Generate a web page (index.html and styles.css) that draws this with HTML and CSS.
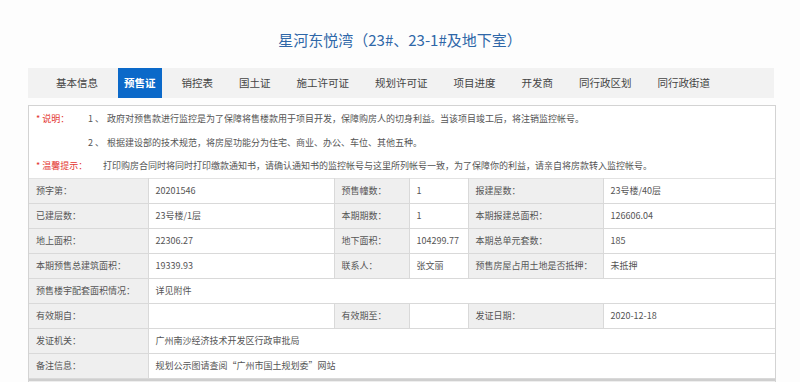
FILE: index.html
```html
<!DOCTYPE html>
<html lang="zh-CN">

<head>
    <meta charset="UTF-8">
    <meta name="viewport" content="width=device-width, initial-scale=1.0">
    <title>星河东悦湾</title>
    <link rel="stylesheet" href="styles.css">
</head>

<body>
    <h1 class="project-title">星河东悦湾（23#、23-1#及地下室）</h1>

    <ul class="tabs">
        <li>基本信息</li>
        <li class="active">预售证</li>
        <li>销控表</li>
        <li>国土证</li>
        <li>施工许可证</li>
        <li>规划许可证</li>
        <li>项目进度</li>
        <li>开发商</li>
        <li>同行政区划</li>
        <li>同行政街道</li>
    </ul>

    <div class="panel">
        <!-- 说明 -->
        <div class="notes">
            <div class="note-row">
                <span class="note-label">* 说明：</span>
                <span class="note-num">1 、</span>
                <span>政府对预售款进行监控是为了保障将售楼款用于项目开发，保障购房人的切身利益。当该项目竣工后，将注销监控帐号。</span>
            </div>
            <div class="note-row">
                <span class="note-label"></span>
                <span class="note-num">2 、</span>
                <span>根据建设部的技术规范，将房屋功能分为住宅、商业、办公、车位、其他五种。</span>
            </div>
            <div class="note-row">
                <span class="note-label note-label-wide">* 温馨提示：</span>
                <span>打印购房合同时将同时打印缴款通知书，请确认通知书的监控帐号与这里所列帐号一致，为了保障你的利益，请亲自将房款转入监控帐号。</span>
            </div>
        </div>

        <table class="info-table">
            <colgroup>
                <col style="width: 119px">
                <col style="width: 186px">
                <col style="width: 75px">
                <col style="width: 59px">
                <col style="width: 135px">
                <col>
            </colgroup>
            <tr>
                <th>预字第：</th>
                <td>20201546</td>
                <th>预售幢数：</th>
                <td>1</td>
                <th>报建屋数：</th>
                <td>23号楼/40层</td>
            </tr>
            <tr>
                <th>已建层数：</th>
                <td>23号楼/1层</td>
                <th>本期期数：</th>
                <td>1</td>
                <th>本期报建总面积：</th>
                <td>126606.04</td>
            </tr>
            <tr>
                <th>地上面积：</th>
                <td>22306.27</td>
                <th>地下面积：</th>
                <td>104299.77</td>
                <th>本期总单元套数：</th>
                <td>185</td>
            </tr>
            <tr>
                <th>本期预售总建筑面积：</th>
                <td>19339.93</td>
                <th>联系人：</th>
                <td>张文丽</td>
                <th>预售房屋占用土地是否抵押：</th>
                <td>未抵押</td>
            </tr>
            <tr>
                <th>预售楼宇配套面积情况：</th>
                <td colspan="5">详见附件</td>
            </tr>
            <tr>
                <th>有效期自：</th>
                <td></td>
                <th>有效期至：</th>
                <td></td>
                <th>发证日期：</th>
                <td>2020-12-18</td>
            </tr>
            <tr>
                <th>发证机关：</th>
                <td colspan="5">广州南沙经济技术开发区行政审批局</td>
            </tr>
            <tr>
                <th>备注信息：</th>
                <td colspan="5">规划公示图请查阅“广州市国土规划委”网站</td>
            </tr>
        </table>
        <div class="panel-foot"></div>
    </div>
</body>

</html>
```

FILE: styles.css
```css
html,
body,
h1,
ul,
li,
table,
th,
td {
    margin: 0px;
    padding: 0px;
}

body {
    background: #fdfdfd;
    font-family: "Noto Sans CJK SC", "Noto Sans", sans-serif;
    color: #555555;
}

.project-title {
    padding-top: 31px;
    height: 37px;
    font-size: 15px;
    line-height: 18px;
    font-weight: normal;
    text-align: center;
    color: #2f67a8;
}

.tabs {
    display: flex;
    gap: 13px;
    list-style: none;
    margin: 0px 26px 0px 28px;
    padding-left: 21.5px;
    height: 30px;
    background: #f2f2f2;
}

.tabs li {
    padding: 0px 6.5px;
    font-size: 10.5px;
    line-height: 30px;
    color: #444444;
}

.tabs li.active {
    background: #0b69c9;
    color: #ffffff;
    font-weight: bold;
}

.panel {
    margin: 7px 24px 0px 28px;
    border: 1px solid #d3d3d3;
    border-bottom: none;
    background: #ffffff;
}

.notes {
    padding-top: 1px;
    font-size: 9px;
    color: #555555;
}

.note-row {
    display: flex;
    line-height: 23.5px;
    padding-left: 7px;
}

.note-label {
    width: 52px;
    color: #e3342f;
}

.note-label-wide {
    width: 67px;
}

.note-num {
    width: 19px;
}

.info-table {
    width: 746px;
    border-collapse: collapse;
    table-layout: fixed;
    font-size: 9px;
}

.info-table th,
.info-table td {
    height: 24px;
    padding: 0px 7px;
    border: 1px solid #d9d9d9;
    text-align: left;
    font-weight: normal;
    color: #555555;
    white-space: nowrap;
}

.info-table tr:first-child th,
.info-table tr:first-child td {
    border-top-color: #e2e2e2;
}

.info-table th:first-child {
    border-left: none;
}

.info-table td:last-child {
    border-right: none;
}

.info-table th {
    background: #efefef;
}

.info-table td {
    background: #ffffff;
}

.panel-foot {
    height: 10px;
    border-top: 2px solid #cfcfcf;
    background: #eeeeee;
}
```
